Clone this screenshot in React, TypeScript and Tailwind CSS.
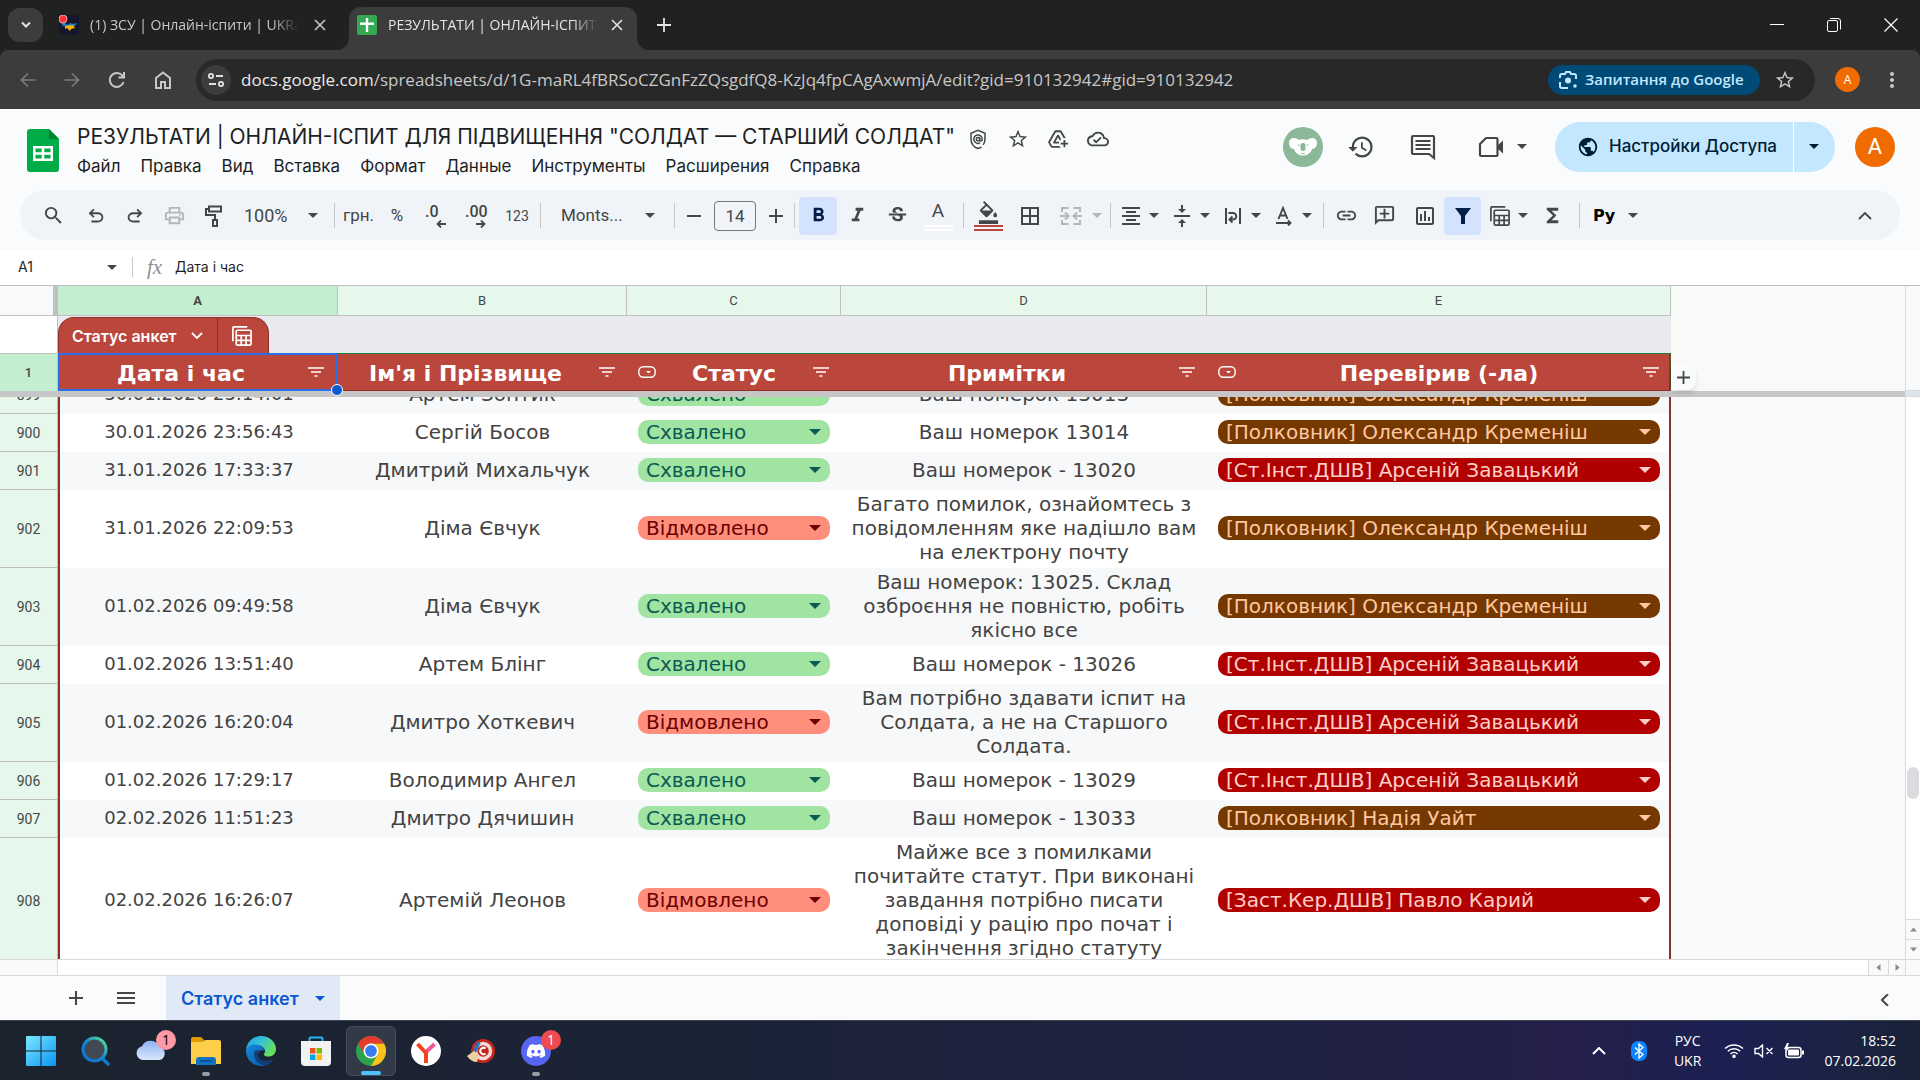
import { ReactNode } from "react";
import {
  MdAddToDrive,
  MdBorderAll,
  MdFormatAlignCenter,
  MdFormatBold,
  MdFormatColorFill,
  MdFormatItalic,
  MdFunctions,
  MdHistory,
  MdLink,
  MdMoreVert,
  MdOutlineAddComment,
  MdOutlineCloudDone,
  MdOutlineInsertChart,
  MdOutlinePrint,
  MdPublic,
  MdSearch,
  MdStarOutline,
  MdStrikethroughS,
  MdVerticalAlignCenter,
} from "react-icons/md";
import { FaDiscord } from "react-icons/fa";

const GREEN = "bg-[#a1e3a1] text-[#0a5a55]";
const RED = "bg-[#ff8f7c] text-[#6b0000]";
const BROWN = "bg-[#753800] text-[#ffc8a1]";
const DARK_RED = "bg-[#b10000] text-[#ffcfc9]";

const rows = [
  { n: 899, date: "30.01.2026 23:14:01", name: "Артем Зонтик", ok: true, note: "Ваш номерок 13013", by: "[Полковник] Олександр Кременіш", color: BROWN },
  { n: 900, date: "30.01.2026 23:56:43", name: "Сергій Босов", ok: true, note: "Ваш номерок 13014", by: "[Полковник] Олександр Кременіш", color: BROWN },
  { n: 901, date: "31.01.2026 17:33:37", name: "Дмитрий Михальчук", ok: true, note: "Ваш номерок - 13020", by: "[Ст.Інст.ДШВ] Арсеній Завацький", color: DARK_RED },
  { n: 902, date: "31.01.2026 22:09:53", name: "Діма Євчук", ok: false, note: "Багато помилок, ознайомтесь з повідомленням яке надішло вам на електрону почту", by: "[Полковник] Олександр Кременіш", color: BROWN },
  { n: 903, date: "01.02.2026 09:49:58", name: "Діма Євчук", ok: true, note: "Ваш номерок: 13025. Склад озброєння не повністю, робіть якісно все", by: "[Полковник] Олександр Кременіш", color: BROWN },
  { n: 904, date: "01.02.2026 13:51:40", name: "Артем Блінг", ok: true, note: "Ваш номерок - 13026", by: "[Ст.Інст.ДШВ] Арсеній Завацький", color: DARK_RED },
  { n: 905, date: "01.02.2026 16:20:04", name: "Дмитро Хоткевич", ok: false, note: "Вам потрібно здавати іспит на Солдата, а не на Старшого Солдата.", by: "[Ст.Інст.ДШВ] Арсеній Завацький", color: DARK_RED },
  { n: 906, date: "01.02.2026 17:29:17", name: "Володимир Ангел", ok: true, note: "Ваш номерок - 13029", by: "[Ст.Інст.ДШВ] Арсеній Завацький", color: DARK_RED },
  { n: 907, date: "02.02.2026 11:51:23", name: "Дмитро Дячишин", ok: true, note: "Ваш номерок - 13033", by: "[Полковник] Надія Уайт", color: BROWN },
  { n: 908, date: "02.02.2026 16:26:07", name: "Артемій Леонов", ok: false, note: "Майже все з помилками почитайте статут. При виконані завдання потрібно писати доповіді у рацію про почат і закінчення згідно статуту", by: "[Заст.Кер.ДШВ] Павло Карий", color: DARK_RED },
];

function Caret({ className = "" }: { className?: string }) {
  return (
    <svg viewBox="0 0 10 5" className={`h-[5px] w-[10px] shrink-0 fill-current ${className}`}>
      <path d="M0 0h10L5 5z" />
    </svg>
  );
}

function Close() {
  return (
    <svg viewBox="0 0 12 12" className="size-3 stroke-current" strokeWidth="1.6">
      <path d="M1 1l10 10M11 1L1 11" />
    </svg>
  );
}

function BrowserTabs() {
  return (
    <div className="flex h-[50px] items-end bg-[#202221] font-['Open_Sans','Noto_Sans',sans-serif] text-sm text-[#e3e3e3]">
      <button aria-label="Пошук вкладок" className="mb-2 ml-2 flex h-[34px] w-[35px] items-center justify-center rounded-xl bg-[#3c3c3c]">
        <svg viewBox="0 0 12 8" className="h-2 w-3 fill-none stroke-current" strokeWidth="2">
          <path d="M2 1.500l4 4 4-4" />
        </svg>
      </button>
      <div className="flex h-[42px] w-[306px] items-center pb-2 pl-4 text-[#c7c7c7]">
        <svg viewBox="0 0 20 20" className="size-5 shrink-0">
          <rect width="20" height="20" rx="3" fill="#15182b" />
          <path d="M2 8h4l2 2 3-2 3 1 4-1-2 3H4z" fill="#1c7fd0" />
          <path d="M6 11l8-1 2 3-4 1-1 2-3-3-2 1z" fill="#f4b400" />
          <circle cx="4" cy="4" r="4" fill="#f33" stroke="#fbb" strokeWidth=".8" />
        </svg>
        <span className="ml-[11px] w-[208px] overflow-hidden whitespace-nowrap [mask-image:linear-gradient(to_right,black_88%,transparent)]">
          (1) ЗСУ | Онлайн-іспити | UKRAINE
        </span>
        <button aria-label="Закрити вкладку" className="ml-4"><Close /></button>
      </div>
      <div className="relative flex h-[43px] w-[288px] items-center rounded-t-xl bg-[#3c3c3c] pb-2 pl-2">
        <svg viewBox="0 0 12 12" className="absolute bottom-0 -left-3 size-3 fill-[#3c3c3c]"><path d="M12 0v12H0A12 12 0 0 0 12 0z" /></svg>
        <svg viewBox="0 0 12 12" className="absolute -right-3 bottom-0 size-3 fill-[#3c3c3c]"><path d="M0 0v12h12A12 12 0 0 1 0 0z" /></svg>
        <svg viewBox="0 0 20 20" className="size-5 shrink-0">
          <rect width="20" height="20" rx="2" fill="#34a853" />
          <path d="M8.800 3h2.400v4.500H17v2.400h-5.800V17H8.800V9.900H3V7.500h5.800z" fill="#fff" />
        </svg>
        <span className="ml-[11px] w-[210px] overflow-hidden whitespace-nowrap [mask-image:linear-gradient(to_right,black_88%,transparent)]">
          РЕЗУЛЬТАТИ | ОНЛАЙН-ІСПИТ ДЛЯ
        </span>
        <button aria-label="Закрити вкладку" className="ml-[13px]"><Close /></button>
      </div>
      <button aria-label="Нова вкладка" className="mb-[18px] ml-5">
        <svg viewBox="0 0 14 14" className="size-[14px] stroke-current" strokeWidth="1.8"><path d="M7 0v14M0 7h14" /></svg>
      </button>
      <div className="mb-[18px] ml-auto flex items-center gap-[43px] pr-[22px] text-white">
        <button aria-label="Згорнути"><svg viewBox="0 0 14 14" className="size-[14px] stroke-current"><path d="M0 6.500h14" /></svg></button>
        <button aria-label="Відновити">
          <svg viewBox="0 0 14 14" className="size-[14px] fill-none stroke-current"><rect x=".5" y="2.500" width="10" height="11" rx="1.500" /><path d="M3 .5h8a2.500 2.500 0 0 1 2.500 2.500v8.500" /></svg>
        </button>
        <button aria-label="Закрити"><svg viewBox="0 0 14 14" className="size-[14px] stroke-current" strokeWidth="1.200"><path d="M.5.5l13 13M13.500.5l-13 13" /></svg></button>
      </div>
    </div>
  );
}

function AddressBar() {
  return (
    <div className="bg-[#202221]">
      <div className="flex h-[59px] items-center rounded-t-lg bg-[#3c3c3c] pl-5 font-['Open_Sans','Noto_Sans',sans-serif] text-[#c7c7c7]">
        <div className="flex items-center gap-7">
          <button aria-label="Назад" className="text-[#7c7c7c]">
            <svg viewBox="0 0 16 16" className="size-4 fill-none stroke-current" strokeWidth="1.700"><path d="M15.500 8H1.500M8 1.500L1.500 8 8 14.500" /></svg>
          </button>
          <button aria-label="Вперед" className="text-[#7c7c7c]">
            <svg viewBox="0 0 16 16" className="size-4 fill-none stroke-current" strokeWidth="1.700"><path d="M.5 8h14M8 1.500L14.500 8 8 14.500" /></svg>
          </button>
          <button aria-label="Оновити">
            <svg viewBox="0 0 18 18" className="size-[18px] fill-none stroke-current" strokeWidth="2"><path d="M15.500 11A7 7 0 1 1 14 4.200L16 6M16 1v5.500h-5.500" /></svg>
          </button>
          <button aria-label="Головна">
            <svg viewBox="0 0 18 18" className="size-[18px] fill-none stroke-current" strokeWidth="2"><path d="M2 17V7l7-5.500L16 7v10h-5v-6H7v6z" /></svg>
          </button>
        </div>
        <div className="ml-6 flex h-[42px] flex-1 items-center rounded-full bg-[#282828] px-[5px]">
          <button aria-label="Відомості про сайт" className="flex size-[30px] items-center justify-center rounded-full bg-[#3c3c3c] text-[#e3e3e3]">
            <svg viewBox="0 0 16 14" className="h-[14px] w-4 fill-none stroke-current" strokeWidth="1.800"><circle cx="3" cy="3" r="2.100" /><path d="M8 3h7M1 11h7" /><circle cx="13" cy="11" r="2.100" /></svg>
          </button>
          <div className="ml-[10px] flex-1 text-[17px] whitespace-nowrap">
            <span className="text-[#e8e8e8]">docs.google.com</span>
            <span>/spreadsheets/d/1G-maRL4fBRSoCZGnFzZQsgdfQ8-KzJq4fpCAgAxwmjA/edit?gid=910132942#gid=910132942</span>
          </div>
          <button className="flex h-[30px] w-[212px] items-center gap-[7px] rounded-full bg-[#004a77] pl-[10px] text-[15px] font-semibold whitespace-nowrap text-[#c2e7ff]">
            <svg viewBox="0 0 20 20" className="size-5 fill-none stroke-current" strokeWidth="2">
              <path d="M2 8V6a2 2 0 0 1 2-2h3l1-2h4l1 2h3a2 2 0 0 1 2 2v3M2 12v4a2 2 0 0 0 2 2h6" />
              <circle cx="10" cy="10.500" r="3" className="fill-current" stroke="none" />
              <circle cx="17" cy="16" r="1.800" className="fill-current" stroke="none" />
            </svg>
            Запитання до Google
          </button>
          <button aria-label="Додати закладку" className="mx-[14px]"><MdStarOutline className="size-[22px]" /></button>
        </div>
        <button className="ml-5 size-[25px] rounded-full bg-[#f06c00] text-xs text-white">A</button>
        <button aria-label="Меню" className="mr-4 ml-5"><MdMoreVert className="size-6" /></button>
      </div>
    </div>
  );
}

const menus = ["Файл", "Правка", "Вид", "Вставка", "Формат", "Данные", "Инструменты", "Расширения", "Справка"];

function DocHeader() {
  return (
    <header className="flex h-[81px] items-start pt-[10px] pl-[27px] text-[#444746]">
      <svg viewBox="0 0 32 43" className="mt-[10px] h-[43px] w-8 shrink-0">
        <path d="M3 0h19l10 10v30a3 3 0 0 1-3 3H3a3 3 0 0 1-3-3V3a3 3 0 0 1 3-3z" fill="#00ac47" />
        <path d="M22 0l10 10H22z" fill="#00832d" />
        <path d="M6 17h20v15H6zM8.500 19.500v3.700h6.200v-3.700zM17.300 19.500v3.700h6.200v-3.700zM8.500 25.800v3.700h6.200v-3.700zM17.300 25.800v3.700h6.200v-3.700z" fill="#fff" fillRule="evenodd" />
      </svg>
      <div className="ml-[18px]">
        <div className="flex h-9 items-center">
          <h1 className="font-['Inter',sans-serif] text-[21px] whitespace-nowrap text-[#1f1f1f]">
            РЕЗУЛЬТАТИ | ОНЛАЙН-ІСПИТ ДЛЯ ПІДВИЩЕННЯ "СОЛДАТ — СТАРШИЙ СОЛДАТ"
          </h1>
          <div className="ml-3 flex items-center gap-[18px] pt-1">
            <button aria-label="Метка">
              <svg viewBox="0 0 22 22" className="size-[22px] fill-none stroke-current" strokeWidth="1.500">
                <path d="M14.500 19.200L11 20.500c-4.200-1.400-7-4.700-7-9.500V5.200l7-2.900 7 2.900V11c0 2.300-.7 4.300-1.800 5.900" />
                <circle cx="11" cy="11.200" r="1.700" /><path d="M12.700 9.500v2.300c0 1.900 2.500 1.600 2.500-.6a4.200 4.200 0 1 0-2.100 3.600" />
              </svg>
            </button>
            <button aria-label="Избранное"><MdStarOutline className="size-[22px]" /></button>
            <button aria-label="Добавить на Диск"><MdAddToDrive className="size-[22px]" /></button>
            <button aria-label="Сохранено"><MdOutlineCloudDone className="size-[22px]" /></button>
          </div>
        </div>
        <nav className="flex gap-5 pt-px font-['Inter',sans-serif] text-[17px] leading-5 text-[#1f1f1f]">
          {menus.map((m) => <button key={m}>{m}</button>)}
        </nav>
      </div>
      <div className="mr-[25px] ml-auto flex h-[55px] items-center">
        <span className="flex size-10 items-center justify-center rounded-full bg-[#8ab898]">
          <svg viewBox="0 0 28 20" className="h-5 w-7">
            <path d="M5 1c2 0 4 1 5 2 2-1 6-1 8 0 1-1 3-2 5-2 3 0 5 2 5 5s-2 6-5 6c-1 3-2 4-4 5-2 2-8 2-10 0-2-1-3-2-4-5-3 0-5-3-5-6s2-5 5-5z" fill="#fff" />
            <rect x="11.500" y="6" width="5" height="8" rx="2.500" fill="#8ab898" />
            <path d="M12 16c1 1 3 1 4 0" stroke="#8ab898" fill="none" />
            <circle cx="9.500" cy="8" r=".8" fill="#8ab898" /><circle cx="18.500" cy="8" r=".8" fill="#8ab898" />
          </svg>
        </span>
        <button aria-label="История" className="ml-6"><MdHistory className="size-7" /></button>
        <button aria-label="Комментарии" className="ml-[35px]">
          <svg viewBox="0 0 26 26" className="size-[26px] fill-none stroke-current" strokeWidth="2.200">
            <path d="M24 24l-5-4H3a1 1 0 0 1-1-1V3a1 1 0 0 1 1-1h20a1 1 0 0 1 1 1z" />
            <path d="M5.500 7h15M5.500 11h15M5.500 15h15" />
          </svg>
        </button>
        <button aria-label="Встреча" className="ml-[42px] flex items-center gap-[13px]">
          <svg viewBox="0 0 26 22" className="h-[22px] w-[26px] fill-none stroke-current" strokeWidth="2.200">
            <path d="M8 2h10.500a1 1 0 0 1 1 1v16a1 1 0 0 1-1 1H3a1 1 0 0 1-1-1V8z" />
            <path d="M20 9l5-4.500v13L20 13z" className="fill-current" stroke="none" />
          </svg>
          <Caret />
        </button>
        <div className="ml-7 flex h-[50px] overflow-hidden rounded-full bg-[#c2e7ff] text-[#001d35]">
          <button className="flex w-[239px] items-center gap-[10px] border-r border-white pl-[22px] font-['Inter',sans-serif] text-[17px] font-medium whitespace-nowrap">
            <MdPublic className="size-[22px]" />
            Настройки Доступа
          </button>
          <button aria-label="Параметры доступа" className="flex w-[41px] items-center pl-[15px]"><Caret /></button>
        </div>
        <button className="ml-5 size-10 rounded-full bg-[#f06c00] font-['Roboto',sans-serif] text-[22px] text-white">A</button>
      </div>
    </header>
  );
}

function Tool({ label, className = "w-10", children }: { label: string; className?: string; children: ReactNode }) {
  return (
    <button aria-label={label} className={`flex h-[38px] shrink-0 items-center justify-center ${className}`}>
      {children}
    </button>
  );
}

function Sep() {
  return <span className="mx-1 h-[25px] w-px shrink-0 bg-[#c4c7c5]" />;
}

function ToolMenu({ label, children }: { label: string; children: ReactNode }) {
  return (
    <button aria-label={label} className="flex h-[38px] w-[51px] shrink-0 items-center">
      <span className="flex w-8 justify-center">{children}</span>
      <Caret className="ml-[2px]" />
    </button>
  );
}

function TableIcon({ className }: { className: string }) {
  return (
    <svg viewBox="0 0 22 22" className={`fill-none stroke-current ${className}`} strokeWidth="1.800">
      <path d="M2 17V3a1 1 0 0 1 1-1h14" />
      <rect x="5.500" y="5.500" width="15.500" height="15.500" rx="1" />
      <path d="M5.500 11H21M5.500 16H21M10.700 11v10M15.800 11v10" />
    </svg>
  );
}

function Toolbar() {
  return (
    <div className="px-5 pb-[10px]">
      <div className="flex h-[50px] items-center rounded-full bg-[#f0f4f9] pt-px pr-[25px] pl-[10px] font-['Roboto',sans-serif] text-[17px] text-[#444746]">
        <Tool label="Поиск" className="w-[47px]"><MdSearch className="size-[23px]" /></Tool>
        <Tool label="Отменить" className="w-[38px]">
          <svg viewBox="0 -960 960 960" className="size-[22px] fill-current"><path d="M280-200v-80h284q63 0 109.500-40T720-420q0-60-46.500-100T564-560H312l104 104-56 56-200-200 200-200 56 56-104 104h252q97 0 166.500 63T800-420q0 94-69.500 157T564-200H280Z" /></svg>
        </Tool>
        <Tool label="Повторить">
          <svg viewBox="0 -960 960 960" className="size-[22px] fill-current"><path d="M396-200q-97 0-166.500-63T160-420q0-94 69.500-157T396-640h252L544-744l56-56 200 200-200 200-56-56 104-104H396q-63 0-109.500 40T240-420q0 60 46.500 100T396-280h284v80H396Z" /></svg>
        </Tool>
        <Tool label="Печать" className="w-[39px] text-[#b4b6b8]"><MdOutlinePrint className="size-[23px]" /></Tool>
        <Tool label="Копировать формат" className="w-[39px]">
          <svg viewBox="0 0 20 22" className="h-[22px] w-5 fill-none stroke-current" strokeWidth="2">
            <path d="M5 1.500h12v5H5zM5 4H2v6h9v5" />
            <rect x="9" y="15" width="4" height="6" />
          </svg>
        </Tool>
        <button className="flex h-[38px] w-[97px] items-center justify-between pr-3 pl-[11px] text-lg">100%<Caret /></button>
        <Sep />
        <Tool label="Валюта" className="w-[39px] text-[17px]">грн.</Tool>
        <Tool label="Процент" className="w-[38px] text-[17px]">%</Tool>
        <Tool label="Меньше знаков" className="w-[39px] flex-col items-start pl-[9px]">
          <span className="text-base leading-4 font-medium">.0</span>
          <svg viewBox="0 0 10 8" className="ml-[11px] h-2 w-[10px] fill-none stroke-current" strokeWidth="1.800"><path d="M10 4H2M5 .5L1.500 4 5 7.500" /></svg>
        </Tool>
        <Tool label="Больше знаков" className="w-[43px] flex-col items-start pl-[10px]">
          <span className="text-base leading-4 font-medium">.00</span>
          <svg viewBox="0 0 10 8" className="ml-[11px] h-2 w-[10px] fill-none stroke-current" strokeWidth="1.800"><path d="M0 4h8M5 .5L8.500 4 5 7.500" /></svg>
        </Tool>
        <Tool label="Другие форматы" className="w-[38px] text-sm">123</Tool>
        <Sep />
        <button className="ml-px flex h-[38px] w-[124px] items-center justify-between pr-[15px] pl-[15px]">Monts...<Caret /></button>
        <Sep />
        <Tool label="Уменьшить" className="w-[30px]"><svg viewBox="0 0 14 14" className="size-[14px] stroke-current" strokeWidth="2"><path d="M0 7h14" /></svg></Tool>
        <input aria-label="Размер шрифта" defaultValue="14" className="mx-[5px] h-[30px] w-[42px] rounded border border-[#747775] text-center" />
        <Tool label="Увеличить" className="w-[29px]"><svg viewBox="0 0 14 14" className="size-[14px] stroke-current" strokeWidth="2"><path d="M0 7h14M7 0v14" /></svg></Tool>
        <Sep />
        <Tool label="Полужирный" className="w-[38px] rounded bg-[#d3e3fd] text-[#041e49]"><MdFormatBold className="size-[23px]" /></Tool>
        <Tool label="Курсив"><MdFormatItalic className="size-[23px]" /></Tool>
        <Tool label="Зачеркнутый">
          <MdStrikethroughS className="size-[23px]" />
        </Tool>
        <Tool label="Цвет текста" className="w-[42px] flex-col">
          <span className="text-[19px] leading-5">A</span>
          <span className="mt-1 h-[6px] w-[29px] border-y-2 border-white bg-[#f0f4f9]" />
        </Tool>
        <Sep />
        <Tool label="Цвет заливки" className="w-[41px] flex-col">
          <MdFormatColorFill className="size-[23px]" />
          <span className="mt-px h-[6px] w-[29px] border-y-2 border-[#bb463c] bg-[#f0f4f9]" />
        </Tool>
        <Tool label="Границы" className="w-[41px]"><MdBorderAll className="size-6" /></Tool>
        <button aria-label="Объединить" className="flex h-[38px] w-14 items-center gap-[10px] pl-[10px] text-[#b4b6b8]">
          <svg viewBox="0 0 22 20" className="h-5 w-[22px] fill-none stroke-current" strokeWidth="2">
            <path d="M8.500 2H2v4M8.500 18H2v-4M13.500 2H20v4M13.500 18H20v-4M0 10h8M5 6.500L8.500 10 5 13.500M22 10h-8M17 6.500L13.500 10l3.500 3.500" />
          </svg>
          <Caret />
        </button>
        <Sep />
        <ToolMenu label="Выравнивание"><MdFormatAlignCenter className="size-6" /></ToolMenu>
        <ToolMenu label="По вертикали"><MdVerticalAlignCenter className="size-6" /></ToolMenu>
        <ToolMenu label="Перенос">
          <svg viewBox="0 0 18 18" className="size-[18px] fill-none stroke-current" strokeWidth="2">
            <path d="M2 1v16M16 1v16M4.500 6H9a3 3 0 0 1 0 6.500H6M8.500 9.500l-3 3 3 3" />
          </svg>
        </ToolMenu>
        <ToolMenu label="Поворот текста">
          <svg viewBox="0 0 18 20" className="h-5 w-[18px] fill-none stroke-current" strokeWidth="1.900">
            <path d="M3.500 13L8 2l4.500 11M5 9.500h6M1 17h14M13 14.500l2.500 2.500-2.500 2.500" />
          </svg>
        </ToolMenu>
        <Sep />
        <Tool label="Ссылка" className="w-9"><MdLink className="size-[23px]" /></Tool>
        <Tool label="Комментарий" className="w-[41px]"><MdOutlineAddComment className="size-[23px] -scale-x-100" /></Tool>
        <Tool label="Диаграмма" className="w-[39px]"><MdOutlineInsertChart className="size-6" /></Tool>
        <Tool label="Фильтр" className="w-[37px] rounded bg-[#d3e3fd] text-[#041e49]">
          <svg viewBox="0 0 16 16" className="size-4 fill-current"><path d="M0 0h16L10 8v8H6V8z" /></svg>
        </Tool>
        <button aria-label="Таблицы" className="flex h-[38px] w-[49px] items-center gap-2 pl-[8px]"><TableIcon className="size-[21px]" /><Caret /></button>
        <Tool label="Функции" className="w-[45px]"><MdFunctions className="size-[23px]" /></Tool>
        <Sep />
        <button aria-label="Python" className="flex h-[38px] w-[54px] items-center justify-between pl-[9px] font-bold text-black"><span className="font-['DejaVu_Sans',sans-serif] text-base">Pу</span><Caret className="text-[#444746]" /></button>
        <button aria-label="Скрыть меню" className="ml-auto flex w-5 justify-center">
          <svg viewBox="0 0 14 8" className="h-2 w-[14px] fill-none stroke-current" strokeWidth="1.800"><path d="M1 7l6-6 6 6" /></svg>
        </button>
      </div>
    </div>
  );
}

function FormulaBar() {
  return (
    <div className="flex h-9 items-center border-b border-[#c0c0c0] bg-white pb-px font-['Inter',sans-serif] text-sm text-[#1f1f1f]">
      <input aria-label="Ячейка" defaultValue="A1" className="ml-[18px] w-[89px]" />
      <Caret className="text-[#444746]" />
      <span className="ml-[15px] h-5 w-px bg-[#c7c7c7]" />
      <span className="ml-[14px] w-7 font-['Liberation_Serif',serif] text-[21px] leading-6 text-[#8f8f8f] italic">fx</span>
      <input aria-label="Формула" defaultValue="Дата і час" className="flex-1" />
    </div>
  );
}

function FilterButton() {
  return (
    <button aria-label="Фильтр столбца" className="w-[34px] shrink-0 pl-[6px]">
      <svg viewBox="0 0 16 11" className="h-[11px] w-4 stroke-current" strokeWidth="1.500"><path d="M0 1h16M3 5h10M6.500 9h3" /></svg>
    </button>
  );
}

function DropMark() {
  return (
    <span className="w-[34px] shrink-0 pl-[11px]">
      <svg viewBox="0 0 18 12" className="h-3 w-[18px]">
        <rect x=".8" y=".8" width="16.400" height="10.400" rx="4.500" fill="none" stroke="#fff" strokeWidth="1.400" />
        <path d="M8 5h5l-2.500 2.500z" fill="#fff" />
      </svg>
    </span>
  );
}

function Columns() {
  return (
    <colgroup>
      <col className="w-[58px]" />
      <col className="w-[280px]" />
      <col className="w-[289px]" />
      <col className="w-[214px]" />
      <col className="w-[366px]" />
      <col className="w-[464px]" />
    </colgroup>
  );
}

const tableClass = "w-[1671px] table-fixed border-separate border-spacing-0";
const headings = [
  { title: "Дата і час", drop: false },
  { title: "Ім'я і Прізвище", drop: false },
  { title: "Статус", drop: true },
  { title: "Примітки", drop: false },
  { title: "Перевірив (-ла)", drop: true },
];

function FrozenRows() {
  return (
    <table className={tableClass}>
      <Columns />
      <thead>
        <tr className="h-[30px] font-['Roboto',sans-serif] text-[13px] text-[#444746]">
          <td className="border-r-[5px] border-b border-[#c0c0c0] bg-[#f8f9fa]" />
          <th className="border-r border-b border-[#c0c0c0] bg-[#c3efd0] font-bold">A</th>
          {["B", "C", "D", "E"].map((c) => (
            <th key={c} className="border-r border-b border-[#c0c0c0] bg-[#e6f8ec] font-normal">{c}</th>
          ))}
        </tr>
        <tr className="h-[37px]">
          <td className="border-r border-[#c0c0c0] bg-white" />
          <td colSpan={5} className="bg-[#e8eaed] p-0 align-bottom">
            <div className="flex h-9 w-[211px] overflow-hidden rounded-t-2xl border border-b-0 border-[#8f2f27] bg-[#bb463c] text-white">
              <button className="flex w-[159px] items-center gap-[14px] border-r border-[#8f2f27] pl-[13px] font-['Inter',sans-serif] text-base font-semibold whitespace-nowrap">
                Статус анкет
                <svg viewBox="0 0 12 8" className="h-2 w-3 fill-none stroke-current" strokeWidth="1.800"><path d="M1 1l5 5 5-5" /></svg>
              </button>
              <button aria-label="Представления" className="flex flex-1 items-center justify-center pr-1"><TableIcon className="size-[21px]" /></button>
            </div>
          </td>
        </tr>
        <tr className="h-[38px] font-bold text-white">
          <th className="border-t border-r border-[#c0c0c0] bg-[#c3efd0] font-['Roboto',sans-serif] text-[13px] font-medium text-[#444746]">1</th>
          {headings.map((h, i) => (
            <th
              key={h.title}
              className={`relative bg-[#bb463c] p-0 ${i === 0 ? "border-2 border-[#2a6fea]" : "border-t border-b border-t-[#188038] border-b-[#8f2f27]"} ${i === 4 ? "shadow-[inset_-2px_0_#5f4a2c]" : ""}`}
            >
              <div className="flex items-center">
                {h.drop && <DropMark />}
                <span className="flex-1 pt-[3px] font-['DejaVu_Sans',sans-serif] text-[22px] leading-7 whitespace-nowrap">{h.title}</span>
                <FilterButton />
              </div>
              {i === 0 && <span className="absolute -right-[7px] -bottom-[7px] z-10 size-3 rounded-full border border-white bg-[#0b57d0]" />}
              {i === 4 && (
                <button aria-label="Добавить столбец" className="absolute bottom-0 -right-[25px] flex h-[25px] w-[25px] items-center justify-center rounded-r-lg bg-[#f9fbfd] text-[#444746] shadow-md">
                  <svg viewBox="0 0 13 13" className="size-[13px] stroke-current" strokeWidth="1.800"><path d="M6.500 0v13M0 6.500h13" /></svg>
                </button>
              )}
            </th>
          ))}
        </tr>
      </thead>
    </table>
  );
}

function Chip({ value, label, color }: { value: string; label: string; color: string }) {
  return (
    <div className={`relative mr-[11px] ml-[11px] h-6 rounded-[10px] ${color}`}>
      <select aria-label={label} defaultValue={value} className="block h-6 w-full appearance-none pl-2 leading-6">
        <option>{value}</option>
      </select>
      <svg viewBox="0 0 12 6" className="pointer-events-none absolute top-[9px] right-[9px] h-[6px] w-3 fill-current"><path d="M0 0h12L6 6z" /></svg>
    </div>
  );
}

function DataRows() {
  return (
    <div className="min-h-0 flex-1 overflow-hidden">
      <table className={`${tableClass} -mt-[21px] font-['DejaVu_Sans',sans-serif] text-[20px] leading-6 text-[#434343]`}>
        <Columns />
        <tbody>
          {rows.map((r) => (
            <tr key={r.n} className="h-[38px] text-center odd:bg-[#f6f8f9] even:bg-white">
              <th className="border-r border-b border-[#c0c0c0] bg-[#e6f8ec] p-0 font-['Roboto',sans-serif] text-sm leading-5 font-normal text-[#444746]">{r.n}</th>
              <td className="border-l-2 border-[#8f2f27] p-0 pb-[2px] text-[18px]">{r.date}</td>
              <td className="p-0 pb-[2px]">{r.name}</td>
              <td className="p-0 pb-[2px] text-left"><Chip label={`Статус ${r.n}`} value={r.ok ? "Схвалено" : "Відмовлено"} color={r.ok ? GREEN : RED} /></td>
              <td className="px-1 pt-[2px] pb-1">{r.note}</td>
              <td className="p-0 pb-[2px] text-left shadow-[inset_-2px_0_#7d3a2a]"><Chip label={`Перевірив ${r.n}`} value={r.by} color={r.color} /></td>
            </tr>
          ))}
        </tbody>
      </table>
    </div>
  );
}

function Arrow({ d }: { d: string }) {
  return <svg viewBox="0 0 7 7" className="size-[7px] fill-[#8a8a8a]"><path d={d} /></svg>;
}

function Grid() {
  return (
    <div className="flex min-h-0 flex-1 bg-[#f8faf7]">
      <div className="flex min-w-0 flex-1 flex-col overflow-hidden">
        <FrozenRows />
        <div className="h-[6px] shrink-0 bg-[#c6c6c6]" />
        <DataRows />
      </div>
      <div className="flex w-[15px] flex-col border-l border-[#d9d9d9] bg-white">
        <div className="h-[105px] border-b border-[#d9d9d9] bg-[#f8f9fa]" />
        <div className="h-[6px] border-b border-[#d9d9d9] bg-[#dde5ec]" />
        <div className="mx-px mt-[370px] h-8 rounded-full bg-[#dadce0]" />
        <button aria-label="Вверх" className="mt-auto flex h-5 items-center justify-center border-t border-[#d9d9d9] bg-[#f8f9fa]"><Arrow d="M0 5.500h7L3.500 1.500z" /></button>
        <button aria-label="Вниз" className="flex h-5 items-center justify-center border-t border-[#d9d9d9] bg-[#f8f9fa]"><Arrow d="M0 1.500h7L3.500 5.500z" /></button>
      </div>
    </div>
  );
}

function SheetTabs() {
  return (
    <>
      <div className="flex h-4 border-t border-[#d9d9d9] bg-white">
        <div className="w-[58px] border-r border-[#d9d9d9] bg-[#f8f9fa]" />
        <div className="flex-1" />
        <button aria-label="Влево" className="flex w-5 items-center justify-center border-l border-[#d9d9d9] bg-[#f8f9fa]"><Arrow d="M5.500 0v7L1.500 3.500z" /></button>
        <button aria-label="Вправо" className="flex w-[18px] items-center justify-center border-x border-[#d9d9d9] bg-[#f8f9fa]"><Arrow d="M1.500 0v7l4-3.500z" /></button>
        <div className="w-[14px] bg-[#f8f9fa]" />
      </div>
      <div className="flex h-[45px] items-center border-t border-[#d9d9d9] bg-[#f9fbfd] pl-[69px] text-[#444746]">
        <button aria-label="Добавить лист"><svg viewBox="0 0 14 14" className="size-[14px] stroke-current" strokeWidth="2"><path d="M7 0v14M0 7h14" /></svg></button>
        <button aria-label="Все листы" className="ml-[34px]">
          <svg viewBox="0 0 18 12" className="h-3 w-[18px] stroke-current" strokeWidth="2"><path d="M0 1h18M0 6h18M0 11h18" /></svg>
        </button>
        <button className="ml-[31px] flex h-full w-[174px] items-center gap-4 bg-[#e1e9f7] pl-[15px] font-['Inter',sans-serif] text-[18px] font-semibold whitespace-nowrap text-[#0b57d0]">
          Статус анкет
          <Caret />
        </button>
        <button aria-label="Боковая панель" className="mr-[31px] ml-auto pt-1">
          <svg viewBox="0 0 8 12" className="h-3 w-2 fill-none stroke-current" strokeWidth="2"><path d="M7 0L1 6l6 6" /></svg>
        </button>
      </div>
    </>
  );
}

function TaskIcon({ label, active = false, running = false, badge, children }: { label: string; active?: boolean; running?: boolean; badge?: string; children: ReactNode }) {
  return (
    <button aria-label={label} className={`relative flex size-[50px] items-center justify-center rounded-md ${active ? "border border-white/10 bg-white/10" : ""}`}>
      {children}
      {badge && <span className={`absolute top-1 right-0 flex size-5 items-center justify-center rounded-full text-sm ${badge}`}>1</span>}
      {active && <span className="absolute bottom-0 h-1 w-5 rounded-full bg-[#4cc2ff]" />}
      {running && <span className="absolute bottom-0 h-1 w-2 rounded-full bg-[#9a9da3]" />}
    </button>
  );
}

function Taskbar() {
  return (
    <footer className="flex h-[60px] items-center border-t border-[#3d424b] bg-[linear-gradient(to_right,#1b232e,#1b2338_40%,#1e2140_65%,#241f4a_82%,#1b2052_90%,#1a2338)] pl-4 font-['Open_Sans','Noto_Sans',sans-serif] text-white">
      <div className="flex gap-[5px]">
        <TaskIcon label="Пуск">
          <svg viewBox="0 0 30 30" className="size-[30px]">
            <defs><linearGradient id="win" x1="0" y1="0" x2="1" y2="1"><stop stopColor="#7beaff" /><stop offset="1" stopColor="#0a93f5" /></linearGradient></defs>
            <path d="M0 1a1 1 0 0 1 1-1h13.500v14.500H0zM15.500 0H29a1 1 0 0 1 1 1v13.500H15.500zM0 15.500h14.500V30H1a1 1 0 0 1-1-1zM15.500 15.500H30V29a1 1 0 0 1-1 1H15.500z" fill="url(#win)" />
          </svg>
        </TaskIcon>
        <TaskIcon label="Поиск Windows">
          <svg viewBox="0 0 30 30" className="size-[30px] fill-none" strokeLinecap="round">
            <defs><linearGradient id="find" x1="0" y1="1" x2="1" y2="0"><stop stopColor="#0a6fd0" /><stop offset=".5" stopColor="#1486d8" /><stop offset="1" stopColor="#5be88c" /></linearGradient></defs>
            <path d="M21 22l6 6" stroke="#1477cf" strokeWidth="3.500" />
            <circle cx="13.500" cy="13.500" r="11.500" fill="#414a52" stroke="url(#find)" strokeWidth="3" />
          </svg>
        </TaskIcon>
        <TaskIcon label="Погода" badge="bg-[#ff99a4] text-black">
          <svg viewBox="0 0 30 22" className="mb-1 h-[22px] w-[30px]">
            <defs><linearGradient id="cloud" x1="0" y1="0" x2="0" y2="1"><stop stopColor="#8fb2f2" /><stop offset="1" stopColor="#d9e8fb" /></linearGradient></defs>
            <path d="M7 22a7 7 0 0 1-1-13.800A9.500 9.500 0 0 1 23.500 9 6.600 6.600 0 0 1 23 22z" fill="url(#cloud)" />
          </svg>
        </TaskIcon>
        <TaskIcon label="Проводник" running>
          <svg viewBox="0 0 30 28" className="h-7 w-[30px]">
            <path d="M0 2a2 2 0 0 1 2-2h8l3 3v5H0z" fill="#e09a00" />
            <path d="M0 5h12l2-2h14a2 2 0 0 1 2 2v22H0z" fill="#ffcf4a" />
            <path d="M5 28v-5a3 3 0 0 1 3-3h14a3 3 0 0 1 3 3v5z" fill="#1273c4" />
            <path d="M9 24h12" stroke="#0a4a86" strokeWidth="1.500" />
          </svg>
        </TaskIcon>
        <TaskIcon label="Edge">
          <svg viewBox="0 0 30 30" className="size-[30px]">
            <defs>
              <linearGradient id="edgeTop" x1="0" y1="0" x2="1" y2=".5"><stop stopColor="#1c9be0" /><stop offset=".5" stopColor="#35c1d8" /><stop offset="1" stopColor="#66e05a" /></linearGradient>
              <linearGradient id="edgeLow" x1="0" y1="0" x2="1" y2="1"><stop stopColor="#1489de" /><stop offset="1" stopColor="#0c4f9c" /></linearGradient>
            </defs>
            <path d="M0 14C1 5 8 0 15 0c9 0 15 6.500 15 13 0 5-3.500 7.500-7.500 7.500-3 0-5-1-4.500-2.500 3-4-1-8.500-6-8.500C6 9.500 1 12 0 14z" fill="url(#edgeTop)" />
            <path d="M0 14C1.500 10 6 8 10.500 8.500 15 9 18 12 18.500 15c-4-2-7.500 1-6.500 5 1 5 8 8 15 3-3 5-7 7-12 7C6 30-.5 22.500 0 14z" fill="url(#edgeLow)" />
            <path d="M8 17c0 6 4 11 10 12.500C23 28.500 26 25.500 27.500 23c-8 4-15 1-15.500-4 0-2 .5-3 1.500-4.500C10 14 8 15 8 17z" fill="#123f78" />
          </svg>
        </TaskIcon>
        <TaskIcon label="Microsoft Store">
          <svg viewBox="0 0 30 30" className="size-[30px]">
            <path d="M8.500 6V2.500a1 1 0 0 1 1-1h11a1 1 0 0 1 1 1V6" fill="none" stroke="#27b4ef" strokeWidth="2" />
            <path d="M0 5h30v21a4 4 0 0 1-4 4H4a4 4 0 0 1-4-4z" fill="#f2f2f2" />
            <path d="M9 12h5.500v5.500H9z" fill="#f25022" /><path d="M15.500 12H21v5.500h-5.500z" fill="#7fba00" />
            <path d="M9 18.500h5.500V24H9z" fill="#00a4ef" /><path d="M15.500 18.500H21V24h-5.500z" fill="#ffb900" />
          </svg>
        </TaskIcon>
        <TaskIcon label="Chrome" active>
          <svg viewBox="0 0 30 30" className="size-[30px]">
            <circle cx="15" cy="15" r="15" fill="#2ba24c" />
            <path d="M15 30A15 15 0 0 0 28 7.500H15L21.500 18.700z" fill="#fcc11a" />
            <path d="M15 0a15 15 0 0 1 13 7.500H15a7.500 7.500 0 0 0-6.500 11.200L2 7.500A15 15 0 0 1 15 0z" fill="#e33b2e" />
            <circle cx="15" cy="15" r="7.500" fill="#fff" /><circle cx="15" cy="15" r="5.900" fill="#3b7ded" />
          </svg>
        </TaskIcon>
        <TaskIcon label="Яндекс">
          <svg viewBox="0 0 30 30" className="size-[30px]">
            <circle cx="15" cy="15" r="15" fill="#fff" />
            <path d="M15 16l8.500-8" stroke="#f0569b" strokeWidth="4" /><path d="M6.500 8l8.500 9v10" fill="none" stroke="#f5421f" strokeWidth="4" />
          </svg>
        </TaskIcon>
        <TaskIcon label="CCleaner">
          <svg viewBox="0 0 28 28" className="size-7">
            <circle cx="16" cy="14" r="12" fill="#c4261e" />
            <circle cx="16" cy="14" r="7.500" fill="none" stroke="#f3d9d4" strokeWidth="3.500" />
            <path d="M18.500 11.500a3.200 3.200 0 1 0 0 5" fill="none" stroke="#fff" strokeWidth="2" />
            <path d="M12 5L7 16" stroke="#2873b8" strokeWidth="3.500" />
            <path d="M0 19l7-5 5 4-2 7c-4 0-7-2-10-6z" fill="#f0cfa0" />
          </svg>
        </TaskIcon>
        <TaskIcon label="Discord" running badge="bg-[#f04a4f] text-white">
          <span className="flex size-[30px] items-center justify-center rounded-full bg-[#5865f2]"><FaDiscord className="size-5" /></span>
        </TaskIcon>
      </div>
      <div className="ml-auto flex items-center pr-6">
        <button aria-label="Скрытые значки">
          <svg viewBox="0 0 14 8" className="h-2 w-[14px] fill-none stroke-current" strokeWidth="2"><path d="M1 7l6-6 6 6" /></svg>
        </button>
        <svg viewBox="0 0 16 20" className="ml-[25px] h-5 w-4">
          <rect width="16" height="20" rx="7" fill="#0a84ff" />
          <path d="M4 6.500l8 7L8 17V3l4 3.500-8 7" fill="none" stroke="#fff" strokeWidth="1.300" />
        </svg>
        <button className="ml-[26px] w-[30px] text-sm leading-5">РУС<br />UKR</button>
        <button aria-label="Сеть, звук, батарея" className="ml-[21px] flex items-center gap-[10px]">
          <svg viewBox="0 0 20 15" className="h-[15px] w-5 fill-none stroke-current" strokeWidth="1.500">
            <path d="M1 5.500a13 13 0 0 1 18 0M3.800 8.300a9 9 0 0 1 12.400 0M6.500 11a5 5 0 0 1 7 0" /><circle cx="10" cy="13.300" r="1" className="fill-current" />
          </svg>
          <svg viewBox="0 0 20 14" className="h-[14px] w-5 fill-none stroke-current" strokeWidth="1.400"><path d="M1 4.500h3.500L8.500 1v12l-4-3.500H1zM12.500 4l6 6M18.500 4l-6 6" /></svg>
          <svg viewBox="0 0 20 16" className="h-4 w-5">
            <rect x="2" y="4.500" width="15" height="10" rx="2.500" fill="none" stroke="#fff" strokeWidth="1.500" />
            <rect x="4" y="6.500" width="11" height="6" rx="1" fill="#fff" /><path d="M18 7.500h2v4h-2zM3 0L0 6h2.500L1.500 9.500 6 4H3.500L5 0z" fill="#fff" />
          </svg>
        </button>
        <button className="ml-[21px] text-right text-sm leading-5">18:52<br />07.02.2026</button>
      </div>
    </footer>
  );
}

export default function App() {
  return (
    <div className="flex h-screen flex-col overflow-hidden bg-[#f9fbfd]">
      <BrowserTabs />
      <AddressBar />
      <DocHeader />
      <Toolbar />
      <FormulaBar />
      <Grid />
      <SheetTabs />
      <Taskbar />
    </div>
  );
}
